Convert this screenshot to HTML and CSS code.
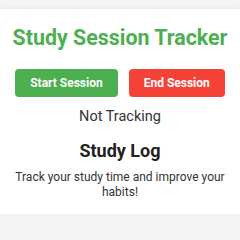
FILE: index.html
```html
<!DOCTYPE html>
<html>
<head>
<meta charset="utf-8">
<link rel="stylesheet" href="styles.css">
</head>
<body>
<div class="card">
  <h1 class="title">Study Session Tracker</h1>
  <div class="actions">
    <button class="btn btn-start">Start Session</button>
    <button class="btn btn-end">End Session</button>
  </div>
  <p class="status">Not Tracking</p>
  <h2 class="log-title">Study Log</h2>
  <p class="log-text">Track your study time and improve your habits!</p>
</div>
</body>
</html>
```
FILE: styles.css
```css
html, body {
  margin: 0;
  padding: 0;
}
body {
  background: #f4f4f4;
  font-family: Roboto, "Liberation Sans", sans-serif;
  color: #333;
  padding-top: 9px;
}
.card {
  background: #fff;
  box-shadow: 0 2px 6px rgba(0,0,0,0.15);
  padding: 16px 10px 14px;
  text-align: center;
}
.title {
  margin: 0;
  color: #4caf50;
  font-size: 21.4px;
  font-weight: 700;
  line-height: 26px;
  white-space: nowrap;
}
.actions {
  margin-top: 18px;
  display: flex;
  justify-content: center;
  gap: 11px;
}
.btn {
  border: none;
  border-radius: 4px;
  color: #fff;
  font-family: Roboto, "Liberation Sans", sans-serif;
  font-size: 12px;
  font-weight: 700;
  padding: 0 15px;
  height: 28px;
  white-space: nowrap;
  flex-shrink: 0;
}
.btn-start { background: #4caf50; }
.btn-end { background: #f44336; }
.status {
  margin: 11.4px 0 0;
  font-size: 14.5px;
  line-height: 18px;
}
.log-title {
  margin: 13.8px 0 0;
  font-size: 18px;
  line-height: 22px;
  color: #222;
}
.log-text {
  margin: 7.7px 0 0;
  font-size: 12px;
  line-height: 15px;
}
```
